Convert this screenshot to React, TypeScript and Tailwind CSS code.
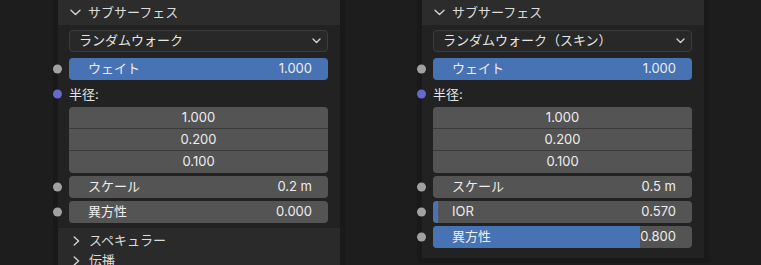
import { ReactNode } from 'react';

const font = "font-['Inter','Noto_Sans_CJK_JP',sans-serif]";

function Chevron({ dir }: { dir: 'down' | 'right' }) {
  if (dir === 'down') {
    return (
      <svg width="11" height="7" viewBox="0 0 11 7" className="shrink-0">
        <path d="M1 1.2 L5.5 5.6 L10 1.2" fill="none" stroke="#d2d2d2" strokeWidth="1.4" strokeLinecap="round" strokeLinejoin="round" />
      </svg>
    );
  }
  return (
    <svg width="7" height="10" viewBox="0 0 7 10" className="shrink-0">
      <path d="M1.2 1 L5.6 5 L1.2 9" fill="none" stroke="#d2d2d2" strokeWidth="1.4" strokeLinecap="round" strokeLinejoin="round" />
    </svg>
  );
}

function Socket({ color = 'bg-[#a1a1a1]' }: { color?: string }) {
  return <div className={`absolute left-[-16px] top-1/2 -translate-y-1/2 w-[9px] h-[9px] rounded-full ${color}`} />;
}

function Slider({ label, value, fill, active }: { label: string; value: string; fill?: string; active?: boolean }) {
  return (
    <div className="relative h-[22px]">
      <Socket />
      <div className={`relative h-full rounded-[4px] overflow-hidden ${active ? 'bg-[#4772b3]' : 'bg-[#545454]'}`}>
        {fill && <div className={`absolute left-0 top-0 bottom-0 bg-[#4772b3] ${fill}`} />}
        <div className="relative h-full flex items-center justify-between pl-[19px] pr-[16px] text-[#ededed]">
          <span>{label}</span>
          <span>{value}</span>
        </div>
      </div>
    </div>
  );
}

function Node({ mode, rows, tail }: { mode: string; rows: ReactNode; tail?: ReactNode }) {
  return (
    <div className={`w-[282px] flex flex-col bg-[#222222] shadow-[0_0_0_5px_#191919] ${font} text-[13px]`}>
      <div className="h-[25px] bg-[#2c2c2c] flex items-center gap-[7px] pl-[12px] text-[#dcdcdc]">
        <Chevron dir="down" />
        <span>サブサーフェス</span>
      </div>
      <div className="flex flex-col pl-[11px] pr-[12px] pt-[5px]">
        <div className="h-[22px] rounded-[4px] bg-[#282828] border border-[#3c3c3c] flex items-center justify-between pl-[9px] pr-[6px] text-[#e6e6e6]">
          <span>{mode}</span>
          <svg width="9" height="6" viewBox="0 0 9 6">
            <path d="M1 1 L4.5 4.5 L8 1" fill="none" stroke="#d0d0d0" strokeWidth="1.4" strokeLinecap="round" strokeLinejoin="round" />
          </svg>
        </div>
        <div className="mt-[6px]">
          <Slider label="ウェイト" value="1.000" active />
        </div>
        <div className="relative h-[27px] flex items-center pt-[3px] text-[#e6e6e6]">
          <Socket color="bg-[#6868cc]" />
          <span>半径:</span>
        </div>
        <div className="rounded-[4px] bg-[#545454] flex flex-col divide-y divide-[#3a3a3a] text-[#ededed]">
          <div className="h-[22px] flex items-center justify-center">1.000</div>
          <div className="h-[22px] flex items-center justify-center">0.200</div>
          <div className="h-[22px] flex items-center justify-center">0.100</div>
        </div>
        <div className="flex flex-col gap-[3px] mt-[3px]">{rows}</div>
      </div>
      {tail}
    </div>
  );
}

export default function App() {
  return (
    <div className="w-[761px] h-[265px] overflow-hidden bg-[#1d1d1d] flex items-start pl-[58px] gap-[82px]">
      <Node
        mode="ランダムウォーク"
        rows={
          <>
            <Slider label="スケール" value="0.2 m" />
            <Slider label="異方性" value="0.000" />
          </>
        }
        tail={
          <div className="mt-[5px] bg-[#2a2a2a] pt-[3px] pb-[10px] text-[#dcdcdc]">
            <div className="h-[20px] flex items-center gap-[9px] pl-[15px]">
              <Chevron dir="right" />
              <span>スペキュラー</span>
            </div>
            <div className="h-[20px] flex items-center gap-[9px] pl-[15px]">
              <Chevron dir="right" />
              <span>伝播</span>
            </div>
          </div>
        }
      />
      <Node
        mode="ランダムウォーク（スキン）"
        rows={
          <>
            <Slider label="スケール" value="0.5 m" />
            <Slider label="IOR" value="0.570" fill="w-[5px]" />
            <Slider label="異方性" value="0.800" fill="w-[80%]" />
          </>
        }
        tail={<div className="h-[10px]" />}
      />
    </div>
  );
}
